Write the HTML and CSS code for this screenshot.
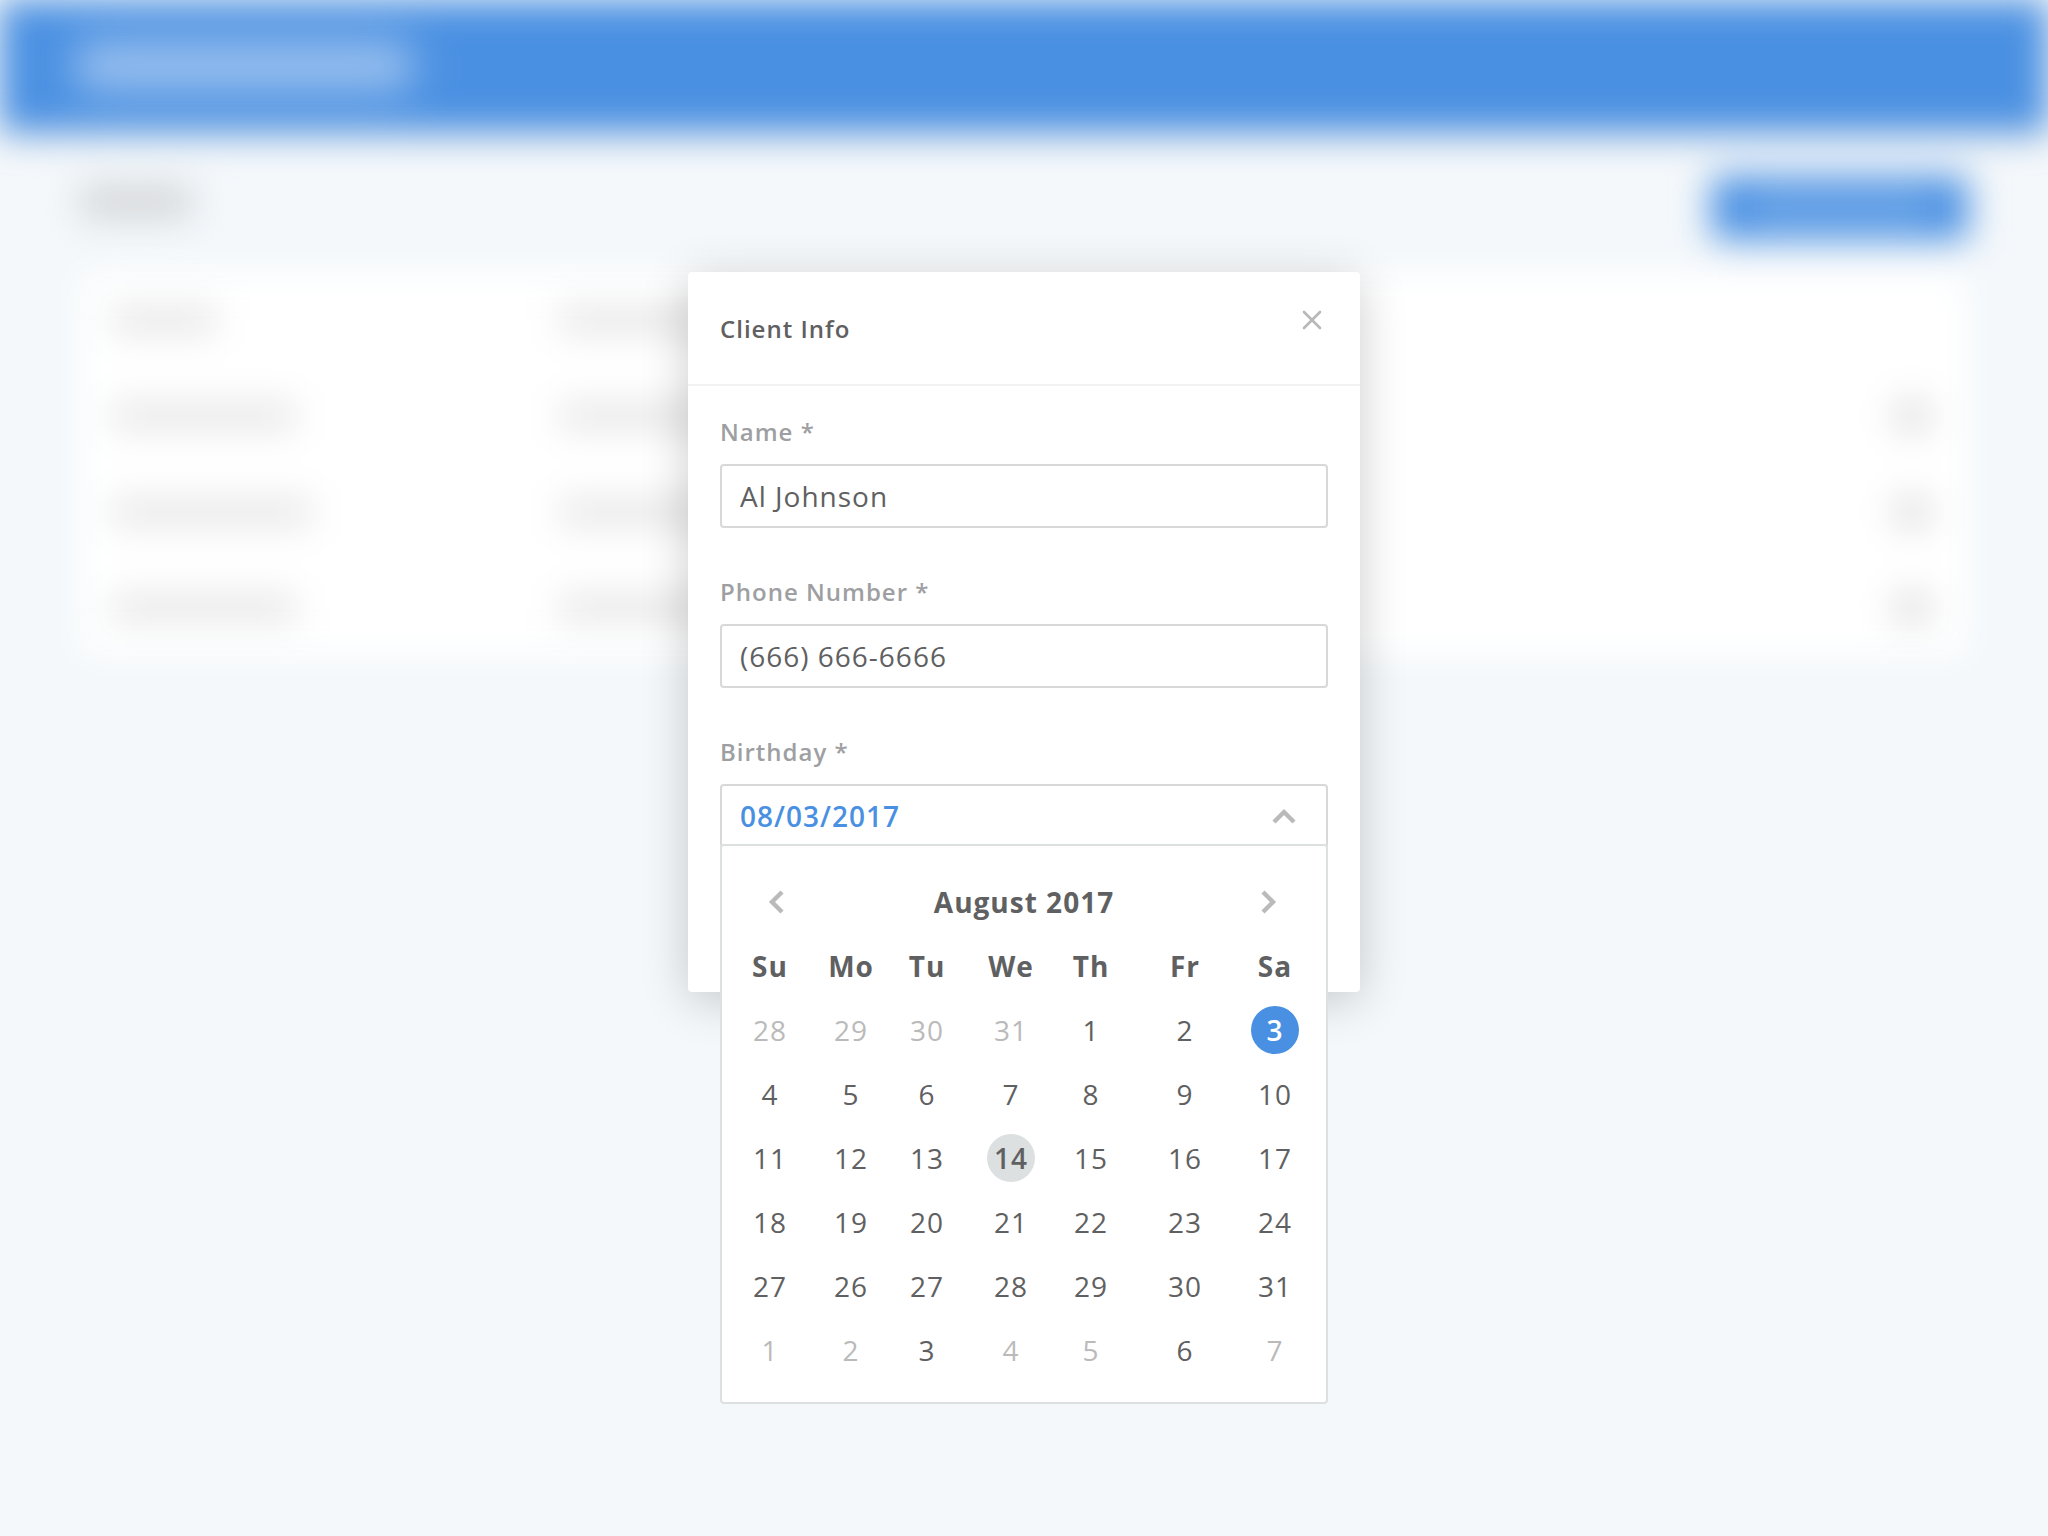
FILE: index.html
```html
<!DOCTYPE html>
<html lang="en">
<head>
  <meta charset="utf-8">
  <title>Client Info</title>
  <link rel="stylesheet" href="styles.css">
</head>
<body>
  <div class="backdrop" aria-hidden="true">
    <div class="topbar"><div class="bar bar-logo"></div></div>
    <div class="content">
      <div class="toolbar">
        <div class="bar bar-title"></div>
        <div class="action"><div class="bar bar-action"></div></div>
      </div>
      <div class="list">
        <div class="row"><div class="bar w-small"></div><div class="bar w-medium"></div></div>
        <div class="row"><div class="bar w-large"></div><div class="bar w-large"></div><div class="bar bar-icon"></div></div>
        <div class="row"><div class="bar w-xlarge"></div><div class="bar w-large"></div><div class="bar bar-icon"></div></div>
        <div class="row"><div class="bar w-large"></div><div class="bar w-large"></div><div class="bar bar-icon"></div></div>
      </div>
    </div>
  </div>

  <div class="overlay">
    <section class="modal" role="dialog" aria-labelledby="modal-title">
      <header class="modal-header">
        <h1 class="modal-title" id="modal-title">Client Info</h1>
        <button class="close" type="button" aria-label="Close">
          <svg width="20" height="20" viewBox="0 0 20 20" fill="none" stroke="currentColor" stroke-width="2.6" stroke-linecap="round"><path d="M2 2 18 18M18 2 2 18"/></svg>
        </button>
      </header>
      <form class="modal-body">
        <div class="field">
          <label class="label" for="name">Name *</label>
          <input class="input" id="name" type="text" value="Al Johnson">
        </div>
        <div class="field">
          <label class="label" for="phone">Phone Number *</label>
          <input class="input" id="phone" type="tel" value="(666) 666-6666">
        </div>
        <div class="field">
          <label class="label" for="birthday">Birthday *</label>
          <div class="picker">
            <input class="input input-date" id="birthday" type="text" value="08/03/2017">
            <button class="toggle" type="button" aria-label="Close calendar">
              <svg width="24" height="16" viewBox="0 0 24 16" fill="none" stroke="currentColor" stroke-width="4.4"><path d="M2 14 12 4 22 14"/></svg>
            </button>
            <div class="calendar">
              <div class="calendar-nav">
                <button class="nav-button" type="button" aria-label="Previous month">
                  <svg width="24" height="24" viewBox="0 0 24 24" fill="none" stroke="currentColor" stroke-width="4.4"><path d="M18 2 8 12 18 22"/></svg>
                </button>
                <h2 class="month">August 2017</h2>
                <button class="nav-button" type="button" aria-label="Next month">
                  <svg width="24" height="24" viewBox="0 0 24 24" fill="none" stroke="currentColor" stroke-width="4.4"><path d="M3 2 13 12 3 22"/></svg>
                </button>
              </div>
              <table class="days">
                <colgroup><col class="col-su"><col class="col-mo"><col class="col-tu"><col class="col-we"><col class="col-th"><col class="col-fr"><col class="col-sa"></colgroup>
                <thead>
                  <tr><th scope="col">Su</th><th scope="col">Mo</th><th scope="col">Tu</th><th scope="col">We</th><th scope="col">Th</th><th scope="col">Fr</th><th scope="col">Sa</th></tr>
                </thead>
                <tbody>
                  <tr>
                    <td><button class="day muted" type="button">28</button></td>
                    <td><button class="day muted" type="button">29</button></td>
                    <td><button class="day muted" type="button">30</button></td>
                    <td><button class="day muted" type="button">31</button></td>
                    <td><button class="day" type="button">1</button></td>
                    <td><button class="day" type="button">2</button></td>
                    <td><button class="day selected" type="button">3</button></td>
                  </tr>
                  <tr>
                    <td><button class="day" type="button">4</button></td>
                    <td><button class="day" type="button">5</button></td>
                    <td><button class="day" type="button">6</button></td>
                    <td><button class="day" type="button">7</button></td>
                    <td><button class="day" type="button">8</button></td>
                    <td><button class="day" type="button">9</button></td>
                    <td><button class="day" type="button">10</button></td>
                  </tr>
                  <tr>
                    <td><button class="day" type="button">11</button></td>
                    <td><button class="day" type="button">12</button></td>
                    <td><button class="day" type="button">13</button></td>
                    <td><button class="day today" type="button">14</button></td>
                    <td><button class="day" type="button">15</button></td>
                    <td><button class="day" type="button">16</button></td>
                    <td><button class="day" type="button">17</button></td>
                  </tr>
                  <tr>
                    <td><button class="day" type="button">18</button></td>
                    <td><button class="day" type="button">19</button></td>
                    <td><button class="day" type="button">20</button></td>
                    <td><button class="day" type="button">21</button></td>
                    <td><button class="day" type="button">22</button></td>
                    <td><button class="day" type="button">23</button></td>
                    <td><button class="day" type="button">24</button></td>
                  </tr>
                  <tr>
                    <td><button class="day" type="button">27</button></td>
                    <td><button class="day" type="button">26</button></td>
                    <td><button class="day" type="button">27</button></td>
                    <td><button class="day" type="button">28</button></td>
                    <td><button class="day" type="button">29</button></td>
                    <td><button class="day" type="button">30</button></td>
                    <td><button class="day" type="button">31</button></td>
                  </tr>
                  <tr>
                    <td><button class="day muted" type="button">1</button></td>
                    <td><button class="day muted" type="button">2</button></td>
                    <td><button class="day" type="button">3</button></td>
                    <td><button class="day muted" type="button">4</button></td>
                    <td><button class="day muted" type="button">5</button></td>
                    <td><button class="day" type="button">6</button></td>
                    <td><button class="day muted" type="button">7</button></td>
                  </tr>
                </tbody>
              </table>
            </div>
          </div>
        </div>
      </form>
    </section>
  </div>
</body>
</html>
```
FILE: styles.css
```css
* {
  box-sizing: border-box;
}

body {
  position: relative;
  min-height: 100vh;
  margin: 0;
  background: #f4f8fb;
  color: #5f6061;
  font-family: "Open Sans", "Noto Sans", sans-serif;
  font-size: 28px;
  letter-spacing: 1px;
}

button {
  padding: 0;
  border: 0;
  background: none;
  color: inherit;
  font: inherit;
  letter-spacing: inherit;
  cursor: pointer;
}

svg {
  display: block;
}

/* Client list behind the dialog, out of focus */
.backdrop {
  filter: blur(18px);
}

.topbar {
  display: flex;
  align-items: center;
  height: 132px;
  padding: 0 80px;
  background: #4a90e2;
  box-shadow: 0 4px 8px rgba(0, 0, 0, 0.15);
}

.content {
  padding: 0 80px;
}

.toolbar {
  display: flex;
  align-items: center;
  justify-content: space-between;
  height: 140px;
}

.action {
  display: flex;
  align-items: center;
  justify-content: center;
  width: 256px;
  height: 64px;
  margin-top: 12px;
  border-radius: 4px;
  background: #4a90e2;
}

.list {
  border-radius: 4px;
  background: #fff;
}

.row {
  display: grid;
  grid-template-columns: 448px 1fr auto;
  align-items: center;
  height: 96px;
  padding: 0 40px 0 32px;
}

.bar {
  height: 24px;
  background: #e3e3e3;
}

.bar-logo {
  width: 328px;
  height: 40px;
  background: rgba(255, 255, 255, 0.42);
  box-shadow: 0 0 40px rgba(255, 255, 255, 0.4);
}

.bar-title {
  width: 112px;
  height: 32px;
  background: #d2d4d6;
}

.bar-action {
  width: 176px;
  height: 20px;
  background: rgba(255, 255, 255, 0.25);
}

.bar-icon {
  width: 32px;
  height: 32px;
  background: #dcdcdc;
}

.w-small {
  width: 104px;
}

.w-medium {
  width: 160px;
}

.w-large {
  width: 184px;
}

.w-xlarge {
  width: 200px;
}

/* Dialog */
.overlay {
  position: absolute;
  inset: 0;
  display: flex;
  align-items: flex-start;
  justify-content: center;
  padding-top: 272px;
}

.modal {
  width: 672px;
  border-radius: 4px;
  background: #fff;
  box-shadow: 0 8px 48px rgba(0, 0, 0, 0.2);
}

.modal-header {
  display: flex;
  justify-content: space-between;
  height: 114px;
  padding: 32px;
  border-bottom: 2px solid #f2f2f2;
}

.modal-title {
  margin: 0;
  font-size: 24px;
  font-weight: 600;
  line-height: 50px;
}

.close {
  display: grid;
  place-items: center;
  width: 32px;
  height: 32px;
  color: #b8b8b8;
}

.modal-body {
  display: grid;
  gap: 48px;
  padding: 30px 32px 144px;
}

.field {
  display: grid;
  gap: 16px;
}

.label {
  color: #9e9fa2;
  font-size: 24px;
  font-weight: 600;
  line-height: 32px;
}

.input {
  display: block;
  width: 100%;
  height: 64px;
  padding: 0 18px;
  border: 2px solid #d8d8d8;
  border-radius: 4px;
  outline: 0;
  background: #fff;
  color: inherit;
  font: inherit;
  letter-spacing: inherit;
}

.input-date {
  color: #4a90e2;
  font-weight: 600;
}

.picker {
  position: relative;
}

.toggle {
  position: absolute;
  top: 8px;
  right: 20px;
  display: grid;
  place-items: center;
  width: 48px;
  height: 48px;
  color: #bababa;
}

/* Calendar drop-down */
.calendar {
  position: absolute;
  top: 60px;
  left: 0;
  right: 0;
  padding: 24px 0 20px;
  border: 2px solid #dce0e0;
  border-radius: 4px;
  background: #fff;
}

.calendar-nav {
  display: flex;
  align-items: center;
  justify-content: space-between;
  height: 64px;
  padding: 0 30px;
}

.month {
  margin: 0;
  font-size: 28px;
  font-weight: 700;
}

.nav-button {
  display: grid;
  place-items: center;
  width: 48px;
  height: 48px;
  color: #bababa;
}

.days {
  width: 582px;
  margin-left: 3px;
  border-collapse: collapse;
  table-layout: fixed;
}

.days th,
.days td {
  height: 64px;
  padding: 0;
  text-align: center;
}

.col-su { width: 90px; }
.col-mo { width: 72px; }
.col-tu { width: 80px; }
.col-we { width: 88px; }
.col-th { width: 72px; }
.col-fr { width: 116px; }
.col-sa { width: 64px; }

.day {
  display: block;
  width: 48px;
  height: 48px;
  margin: 0 auto;
  border-radius: 50%;
  line-height: 48px;
}

.muted {
  color: #bababa;
}

.selected {
  background: #4a90e2;
  color: #fff;
  font-weight: 600;
}

.today {
  background: #dce0e0;
  font-weight: 600;
}
```
